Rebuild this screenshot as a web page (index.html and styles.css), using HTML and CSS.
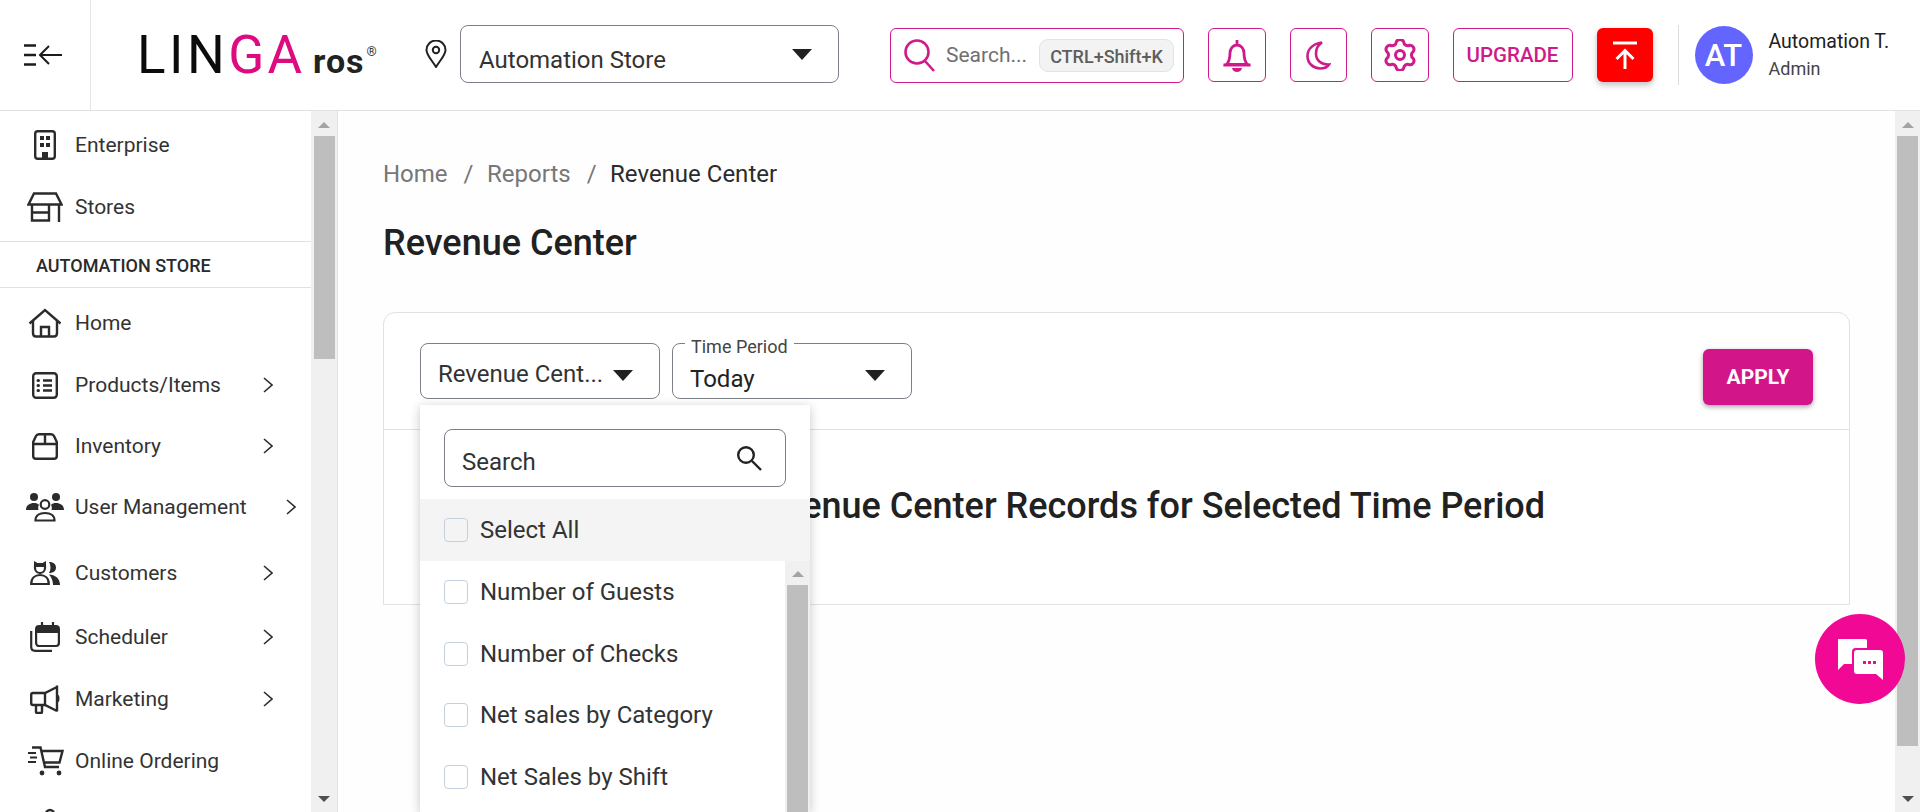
FILE: index.html
```html
<!DOCTYPE html>
<html lang="en">
<head>
    <meta charset="UTF-8">
    <title>Revenue Center</title>
    <link rel="stylesheet" href="styles.css">
</head>
<body>
    <header class="topbar">
        <div class="menu-toggle">
            <svg width="38" height="24" viewBox="0 0 38 24" fill="none" stroke="#1c1c1c" stroke-width="2.4"><path d="M0 2.5h12M0 12h12M0 21.5h12"/><path d="M38 12H16M25 3l-9 9 9 9" stroke-width="2"/></svg>
        </div>
        <div class="logo"><span class="logo-black">LIN</span><span class="logo-pink">GA</span><span class="logo-ros">ros</span><span class="logo-reg">®</span></div>
        <svg class="pin" width="22" height="28" viewBox="0 0 22 28" fill="none" stroke="#222" stroke-width="2"><path d="M11 27C6 19 1.500 15 1.500 10a9.500 9.500 0 0 1 19 0c0 5-4.500 9-9.500 17z"/><circle cx="11" cy="10" r="3.200"/></svg>
        <div class="store-select"><span class="store-name">Automation Store</span><i class="caret"></i></div>
        <div class="global-search">
            <svg width="34" height="34" viewBox="0 0 34 34" fill="none" stroke="#cf1a8b" stroke-width="2.600"><circle cx="14" cy="14" r="11.500"/><path d="M22 23l9 10"/></svg>
            <span class="search-hint">Search...</span>
            <span class="kbd">CTRL+Shift+K</span>
        </div>
        <div class="icon-btn icon-btn-first">
            <svg width="30" height="33" viewBox="0 0 30 33" fill="none" stroke="#cf1a8b" stroke-width="2.800"><path d="M15 1v5M4.500 25.500c3-3 3.500-6.500 3.500-11.500 0-4.500 3-8 7-8s7 3.500 7 8c0 5 .5 8.500 3.500 11.500z"/><path d="M1.500 26h27" stroke-width="3"/><path fill="#cf1a8b" stroke="none" d="M10 29h10c-.5 2.500-2.500 4-5 4s-4.500-1.500-5-4z"/></svg>
        </div>
        <div class="icon-btn">
            <svg width="25" height="29" viewBox="0 0 25 29" fill="none" stroke="#cf1a8b" stroke-width="2.600"><path d="M16 1.500C7 3 1.500 8 1.500 15c0 7.500 6 12.500 12.500 12.500 4 0 7.500-1.500 9-4-7.500.5-13-4-13-11 0-4.500 2-8.500 6-11z"/></svg>
        </div>
        <div class="icon-btn">
            <svg width="32" height="32" viewBox="0 0 32 32" fill="none" stroke="#cf1a8b" stroke-width="3"><path d="M12.280 3.020A4 4 0 0 1 19.720 3.020A4 4 0 0 0 25.380 6.290A4 4 0 0 1 29.100 12.730A4 4 0 0 0 29.100 19.270A4 4 0 0 1 25.380 25.710A4 4 0 0 0 19.720 28.980A4 4 0 0 1 12.280 28.980A4 4 0 0 0 6.620 25.710A4 4 0 0 1 2.900 19.270A4 4 0 0 0 2.900 12.730A4 4 0 0 1 6.620 6.290A4 4 0 0 0 12.280 3.020z"/><circle cx="16" cy="16" r="4.500"/></svg>
        </div>
        <div class="upgrade-btn">UPGRADE</div>
        <div class="publish-btn">
            <svg width="24" height="28" viewBox="0 0 24 28" fill="none" stroke="#fff" stroke-width="3"><path d="M0 2h24"/><path d="M12 28V10M3.500 18L12 9.500l8.500 8.500"/></svg>
        </div>
        <div class="user-chip">
            <div class="avatar">AT</div>
            <div class="user-text">
                <div class="user-name">Automation T.</div>
                <div class="user-role">Admin</div>
            </div>
        </div>
    </header>

    <div class="workspace">
        <aside class="sidebar">
            <nav class="nav">
                <a class="nav-item">
                    <span class="nav-icon"><svg width="22" height="30" viewBox="0 0 22 30" fill="none" stroke="#2b2b2b" stroke-width="2.400"><rect x="1.200" y="1.200" width="19.600" height="27.600" rx="2.500"/><path fill="#2b2b2b" stroke="none" d="M6 6h4v4H6zM12 6h4v4h-4zM6 13h4v4H6zM12 13h4v4h-4zM8 22h6v7H8z"/></svg></span>
                    Enterprise
                </a>
                <a class="nav-item">
                    <span class="nav-icon"><svg width="36" height="30" viewBox="0 0 36 30" fill="none" stroke="#2b2b2b" stroke-width="2.400"><path d="M7 1.500h22l5.500 11h-33z"/><path d="M5 12.500v16h17v-16M5 20.500h17M32 12.500V30"/></svg></span>
                    Stores
                </a>
                <div class="nav-section">AUTOMATION STORE</div>
                <a class="nav-item nav-item-first">
                    <span class="nav-icon"><svg width="34" height="30" viewBox="0 0 34 30" fill="none" stroke="#2b2b2b" stroke-width="2.400"><path d="M1.500 15.500L17 2l15.500 13.500"/><path d="M5 13v12c0 2 1 3.500 3 3.500h18c2 0 3-1.500 3-3.500V13"/><path d="M13 28.500V19h8v9.500"/></svg></span>
                    Home
                </a>
                <a class="nav-item">
                    <span class="nav-icon"><svg width="26" height="27" viewBox="0 0 26 27" fill="none" stroke="#2b2b2b" stroke-width="2.400"><rect x="1.200" y="1.200" width="23.600" height="24.600" rx="3"/><path d="M11 8.500h9M11 13.500h9M11 18.500h9"/><path stroke-width="3" stroke-linecap="round" d="M6 8.500h.5M6 13.500h.5M6 18.500h.5"/></svg></span>
                    Products/Items
                    <svg class="chevron" width="10" height="16" viewBox="0 0 10 16" fill="none" stroke="#2b2b2b" stroke-width="1.600"><path d="M1 1l8 7-8 7"/></svg>
                </a>
                <a class="nav-item nav-item-up1">
                    <span class="nav-icon"><svg width="26" height="27" viewBox="0 0 26 27" fill="none" stroke="#2b2b2b" stroke-width="2.400"><path d="M1.200 9L4 3c.5-1.200 1.500-1.800 3-1.800h12c1.500 0 2.500.6 3 1.800l2.800 6v14c0 1.800-1 2.800-2.800 2.800H4c-1.800 0-2.800-1-2.800-2.800zM1.200 11h23.600M13 1.200V11"/></svg></span>
                    Inventory
                    <svg class="chevron" width="10" height="16" viewBox="0 0 10 16" fill="none" stroke="#2b2b2b" stroke-width="1.600"><path d="M1 1l8 7-8 7"/></svg>
                </a>
                <a class="nav-item nav-item-up1">
                    <span class="nav-icon"><svg width="38" height="30" viewBox="0 0 38 30" fill="#2b2b2b"><circle cx="8" cy="5" r="4"/><circle cx="30" cy="5" r="4"/><path d="M0 18c0-5 4-7 8-7 2 0 4 .5 5 2-1 1-1 3-.5 5zM38 18c0-5-4-7-8-7-2 0-4 .5-5 2 1 1 1 3 .5 5z"/><g fill="none" stroke="#2b2b2b" stroke-width="2.200"><circle cx="19" cy="12.500" r="4.300"/><path d="M9.500 28.500c0-5 4-7.500 9.500-7.500s9.500 2.500 9.500 7.500z"/></g></svg></span>
                    User Management
                    <svg class="chevron chevron-far" width="10" height="16" viewBox="0 0 10 16" fill="none" stroke="#2b2b2b" stroke-width="1.600"><path d="M1 1l8 7-8 7"/></svg>
                </a>
                <a class="nav-item nav-item-down4">
                    <span class="nav-icon"><svg width="30" height="24" viewBox="0 0 30 24" fill="#2b2b2b"><path d="M19 1c5 0 7 2.500 7 5.500S24 12 19 12c2-3 2-8 0-11z"/><path d="M19 13.500c6 .5 11 3.500 11 10.500h-7c0-4-1.500-8-4-10.500z"/><path d="M4 0l3.500 2h5L16 0v6H4z"/><g fill="none" stroke="#2b2b2b" stroke-width="2.200"><path d="M5 4v3a5 5 0 0 0 10 0V4"/><path d="M1.200 23c0-6 4-9 8.800-9s8.800 3 8.800 9z"/></g></svg></span>
                    Customers
                    <svg class="chevron" width="10" height="16" viewBox="0 0 10 16" fill="none" stroke="#2b2b2b" stroke-width="1.600"><path d="M1 1l8 7-8 7"/></svg>
                </a>
                <a class="nav-item nav-item-down2">
                    <span class="nav-icon"><svg width="30" height="30" viewBox="0 0 30 30" fill="none" stroke="#2b2b2b" stroke-width="2.200"><rect x="6.100" y="4" width="22.800" height="20" rx="3"/><path fill="#2b2b2b" stroke="none" d="M7 4h21v7H7z"/><path d="M12 0v5M23 0v5"/><path d="M1.200 9v16c0 2.500 1.500 3.800 4 3.800H22"/></svg></span>
                    Scheduler
                    <svg class="chevron" width="10" height="16" viewBox="0 0 10 16" fill="none" stroke="#2b2b2b" stroke-width="1.600"><path d="M1 1l8 7-8 7"/></svg>
                </a>
                <a class="nav-item">
                    <span class="nav-icon"><svg width="30" height="30" viewBox="0 0 30 30" fill="none" stroke="#2b2b2b" stroke-width="2.400"><path d="M27 1.500v26M27 3L15 9H3c-1 0-1.800.8-1.800 2v8c0 1 .8 2 1.800 2h12l12 6"/><path d="M6 21v7c0 .7.5 1 1.200 1H11c.7 0 1-.3 1-1v-7"/><path d="M15 9v12"/><path fill="#2b2b2b" stroke="none" d="M28 11c2 0 2 7 0 7z"/></svg></span>
                    Marketing
                    <svg class="chevron" width="10" height="16" viewBox="0 0 10 16" fill="none" stroke="#2b2b2b" stroke-width="1.600"><path d="M1 1l8 7-8 7"/></svg>
                </a>
                <a class="nav-item">
                    <span class="nav-icon"><svg width="37" height="30" viewBox="0 0 37 30" fill="none" stroke="#2b2b2b" stroke-width="2.400"><path d="M5 1.500h8.500L18 21h14M13.500 5H35.500l-3 11.500H16.500"/><path d="M1 7h8M3 11.500h7M1 16h8" stroke-width="2"/><circle cx="15" cy="27" r="2.400" fill="#2b2b2b" stroke="none"/><circle cx="32" cy="27" r="2.400" fill="#2b2b2b" stroke="none"/></svg></span>
                    Online Ordering
                </a>
                <a class="nav-item">
                    <span class="nav-icon"><svg width="30" height="30" viewBox="0 0 30 30" fill="none" stroke="#2b2b2b" stroke-width="2.400"><circle cx="20" cy="6" r="4"/><path d="M20 10v18"/></svg></span>
                </a>
            </nav>
            <div class="scrollbar">
                <i class="arrow-up"></i>
                <div class="thumb thumb-side"></div>
                <div class="track-rest"></div>
                <i class="arrow-down"></i>
            </div>
        </aside>

        <main class="main">
            <div class="content">
                <div class="breadcrumb">
                    <span class="crumb-link">Home</span><span class="crumb-sep">/</span><span class="crumb-link">Reports</span><span class="crumb-sep">/</span><span>Revenue Center</span>
                </div>
                <h1 class="page-title">Revenue Center</h1>

                <section class="card">
                    <div class="filters">
                        <div class="filter-select">
                            <span class="filter-value">Revenue Cent...</span><i class="caret"></i>
                        </div>
                        <div class="filter-select filter-labelled">
                            <span class="filter-label">Time Period</span>
                            <span class="filter-value filter-value-low">Today</span><i class="caret"></i>
                        </div>
                        <button class="apply-btn">APPLY</button>

                        <div class="dropdown">
                            <div class="dropdown-search">
                                <span class="dropdown-search-text">Search</span>
                                <svg width="28" height="28" viewBox="0 0 28 28" fill="none" stroke="#222" stroke-width="2.400"><circle cx="11" cy="11" r="7.800"/><path d="M17 17l9 9"/></svg>
                            </div>
                            <label class="option option-all"><i class="check"></i>Select All</label>
                            <div class="option-scroll">
                                <div class="option-list">
                                    <label class="option"><i class="check"></i>Number of Guests</label>
                                    <label class="option"><i class="check"></i>Number of Checks</label>
                                    <label class="option"><i class="check"></i>Net sales by Category</label>
                                    <label class="option"><i class="check"></i>Net Sales by Shift</label>
                                </div>
                                <div class="scrollbar scrollbar-inner">
                                    <i class="arrow-up"></i>
                                    <div class="thumb"></div>
                                </div>
                            </div>
                        </div>
                    </div>
                    <div class="empty-state">No Revenue Center Records for Selected Time Period</div>
                </section>
            </div>
            <div class="scrollbar scrollbar-main">
                <i class="arrow-up"></i>
                <div class="thumb thumb-main"></div>
                <div class="track-rest"></div>
                <i class="arrow-down"></i>
            </div>
        </main>
    </div>

    <div class="chat-fab">
        <svg width="48" height="42" viewBox="0 0 48 42" fill="#fff"><path d="M2 0h27c1.500 0 2 .8 2 2v7H20c-3 0-4 1.500-4 4v12H8l-6 6z"/><path d="M21 11h23c2 0 3 1 3 3v27l-7-6H21c-2 0-3-1-3-3V14c0-2 1-3 3-3z"/><path fill="#f10894" d="M27 22h3v3h-3zM32 22h3v3h-3zM37 22h3v3h-3z"/></svg>
    </div>
</body>
</html>
```

FILE: styles.css
```css
* {
    box-sizing: border-box;
}
html, body {
    margin: 0;
    height: 812px;
    overflow: hidden;
}
body {
    font-family: Roboto, "Liberation Sans", sans-serif;
    color: #212121;
    background: #fff;
    display: flex;
    flex-direction: column;
}

/* top bar */
.topbar {
    height: 111px;
    flex: none;
    display: flex;
    align-items: center;
    border-bottom: 1px solid #e2e2e2;
    background: #fff;
}
.menu-toggle {
    width: 91px;
    height: 100%;
    flex: none;
    display: flex;
    align-items: center;
    padding-left: 24px;
    border-right: 1px solid #e4e4e4;
}
.logo {
    width: 288px;
    margin-left: 44px;
    padding-left: 2px;
    flex: none;
    display: flex;
    align-items: baseline;
    padding-top: 1px;
    font-size: 53px;
    line-height: 1;
}
.logo-black {
    color: #0b0b0b;
    letter-spacing: 3.500px;
}
.logo-pink {
    color: #dd0a80;
    letter-spacing: 3px;
}
.logo-ros {
    font-size: 34px;
    font-weight: 700;
    color: #222;
    margin-left: 8px;
    letter-spacing: 1px;
}
.logo-reg {
    font-size: 13px;
    color: #333;
    margin-left: 2px;
    align-self: flex-start;
    margin-top: 16px;
}
.pin {
    flex: none;
    margin-left: 2px;
    margin-top: -2px;
}
.store-select {
    width: 379px;
    height: 58px;
    margin-left: 13px;
    margin-top: -2px;
    flex: none;
    display: flex;
    align-items: center;
    justify-content: space-between;
    padding: 0 26px 0 18px;
    border: 1px solid #7b7f87;
    border-radius: 8px;
    font-size: 24px;
}
.store-name {
    padding-top: 11px;
    color: #333;
}
.caret {
    display: block;
    width: 0;
    height: 0;
    border-left: 10px solid transparent;
    border-right: 10px solid transparent;
    border-top: 11px solid #212121;
}
.global-search {
    width: 294px;
    height: 55px;
    margin-left: 51px;
    flex: none;
    display: flex;
    align-items: center;
    padding-left: 12px;
    border: 1px solid #cf1a8b;
    border-radius: 6px;
}
.search-hint {
    margin-left: 9px;
    font-size: 21px;
    color: #6f6f6f;
    white-space: nowrap;
}
.kbd {
    margin-left: 12px;
    padding: 0 10px;
    height: 33px;
    line-height: 33px;
    font-size: 18px;
    font-weight: 500;
    color: #5e5e5e;
    background: #f3f3f3;
    border: 1px solid #e3e3e3;
    border-radius: 9px;
    white-space: nowrap;
}
.icon-btn {
    width: 57.500px;
    height: 54px;
    margin-left: 24px;
    flex: none;
    display: flex;
    align-items: center;
    justify-content: center;
    border: 1px solid #cf1a8b;
    border-radius: 6px;
}
.upgrade-btn {
    width: 120px;
    height: 54px;
    margin-left: 24px;
    flex: none;
    display: flex;
    align-items: center;
    justify-content: center;
    border: 1px solid #cf1a8b;
    border-radius: 6px;
    color: #cf1a8b;
    font-size: 20.500px;
    font-weight: 500;
}
.publish-btn {
    width: 56px;
    height: 54px;
    margin-left: 24px;
    flex: none;
    display: flex;
    align-items: center;
    justify-content: center;
    background: #ff0000;
    border-radius: 6px;
    box-shadow: 0 3px 6px rgba(0, 0, 0, .25);
}
.user-chip {
    margin-left: 25px;
    height: 60px;
    display: flex;
    align-items: center;
    padding-left: 16px;
    border-left: 1px solid #dcdcdc;
}
.avatar {
    width: 58px;
    height: 58px;
    flex: none;
    border-radius: 50%;
    background: #6464ff;
    color: #fff;
    display: flex;
    align-items: center;
    justify-content: center;
    font-size: 31px;
    font-weight: 500;
}
.user-text {
    margin-left: 16px;
}
.user-name {
    font-size: 19.500px;
    line-height: 24px;
    white-space: nowrap;
}
.user-role {
    font-size: 18px;
    color: #444;
    line-height: 24px;
    margin-top: 3px;
}

/* body split */
.workspace {
    flex: 1;
    display: flex;
    min-height: 0;
}
.sidebar {
    width: 338px;
    flex: none;
    display: flex;
    border-right: 1px solid #e2e2e2;
}
.nav {
    width: 311px;
    flex: none;
    overflow: hidden;
    padding-top: 3px;
}
.nav-item {
    height: 62px;
    display: flex;
    align-items: center;
    padding-left: 26px;
    font-size: 21px;
    color: #333;
    white-space: nowrap;
}
.nav-item-first { margin-top: 4px; }
.nav-item-up1 { margin-top: -1px; }
.nav-item-down4 { margin-top: 4px; }
.nav-item-down2 { margin-top: 2px; }
.nav-icon {
    width: 38px;
    margin-right: 11px;
    flex: none;
    display: flex;
    justify-content: center;
}
.chevron {
    position: absolute;
    left: 263px;
}
.chevron-far {
    left: 286px;
}
.nav-section {
    height: 47px;
    margin-top: 3px;
    padding: 2px 0 0 36px;
    display: flex;
    align-items: center;
    font-size: 18px;
    font-weight: 500;
    color: #2a2a2a;
    border-top: 1px solid #e2e2e2;
    border-bottom: 1px solid #e2e2e2;
}

/* fake scrollbars, drawn so they show in every browser mode */
.scrollbar {
    width: 26px;
    flex: none;
    display: flex;
    flex-direction: column;
    align-items: center;
    background: #f0f0f0;
    padding-top: 11px;
}
.thumb {
    width: 21px;
    background: #bebebe;
    margin-top: 8px;
    flex: 1;
}
.thumb-side {
    flex: none;
    height: 223px;
}
.thumb-main {
    flex: none;
    height: 610px;
}
.track-rest {
    flex: 1;
}
.arrow-up {
    width: 0;
    height: 0;
    border-left: 6px solid transparent;
    border-right: 6px solid transparent;
    border-bottom: 6px solid #a3a3a3;
}
.arrow-down {
    width: 0;
    height: 0;
    margin-bottom: 10px;
    border-left: 6px solid transparent;
    border-right: 6px solid transparent;
    border-top: 6px solid #505050;
}

/* main column */
.main {
    flex: 1;
    display: flex;
    min-width: 0;
    background: #fefefe;
}
.content {
    flex: 1;
    min-width: 0;
    padding: 45px 45px 0 45px;
}
.breadcrumb {
    display: flex;
    height: 36px;
    align-items: center;
    font-size: 24px;
    color: #2b2b2b;
}
.crumb-link {
    color: #777;
}
.crumb-sep {
    color: #777;
    margin: 0 13.500px 0 16px;
}
.page-title {
    margin: 28px 0 0;
    height: 46px;
    line-height: 46px;
    font-size: 36px;
    font-weight: 500;
    color: #212121;
}
.card {
    margin-top: 46px;
    height: 293px;
    background: #fff;
    border: 1px solid #e2e2e2;
    border-radius: 12px 12px 0 0;
}
.filters {
    position: relative;
    height: 117px;
    padding: 30px 36px 0 36px;
    display: flex;
    border-bottom: 1px solid #e2e2e2;
}
.filter-select {
    position: relative;
    width: 240px;
    height: 56px;
    margin-right: 12px;
    flex: none;
    display: flex;
    align-items: center;
    justify-content: space-between;
    padding: 0 26px 0 17px;
    border: 1px solid #7b7f87;
    border-radius: 8px;
}
.filter-select .caret {
    margin-top: 8px;
}
.filter-value {
    font-size: 24px;
    color: #333;
    margin-top: 5px;
}
.filter-value-low {
    margin-top: 15.500px;
    color: #222;
}
.filter-label {
    position: absolute;
    left: 12px;
    top: -6px;
    padding: 0 6px;
    background: #fff;
    font-size: 18px;
    line-height: 18px;
    color: #444;
}
.apply-btn {
    margin: 6px 0 0 auto;
    width: 110px;
    height: 56px;
    border: 0;
    border-radius: 6px;
    background: #d2168a;
    color: #fff;
    font-family: inherit;
    font-size: 21px;
    font-weight: 700;
    box-shadow: 0 2px 5px rgba(0, 0, 0, .35);
}
.empty-state {
    padding-top: 54px;
    text-align: center;
    font-size: 36px;
    font-weight: 500;
    line-height: 44px;
    color: #212121;
}

/* open multi select, runs off the bottom of the window */
.dropdown {
    position: absolute;
    left: 36px;
    top: 92px;
    width: 390px;
    height: 407px;
    display: flex;
    flex-direction: column;
    background: #fff;
    box-shadow: 0 2px 10px rgba(0, 0, 0, .22);
    padding-top: 24px;
    z-index: 5;
}
.dropdown-search {
    width: 342px;
    height: 58px;
    flex: none;
    margin: 0 0 12px 24px;
    display: flex;
    align-items: center;
    justify-content: space-between;
    padding: 0 22px 0 17px;
    border: 1px solid #7b7f87;
    border-radius: 8px;
    font-size: 24px;
    color: #333;
}
.dropdown-search-text {
    padding-top: 7px;
}
.option {
    height: 61.500px;
    flex: none;
    display: flex;
    align-items: center;
    padding-left: 24px;
    font-size: 24px;
    color: #333;
}
.option-all {
    background: #f4f4f4;
}
.check {
    width: 24px;
    height: 24px;
    margin-right: 12px;
    flex: none;
    background: #fff;
    border: 1px solid #c5cfdd;
    border-radius: 4px;
}
.option-all .check {
    background: #f4f4f4;
}
.option-scroll {
    display: flex;
    flex: 1;
    min-height: 0;
}
.option-list {
    flex: 1;
    padding-top: 1px;
}
.scrollbar-inner {
    width: 25px;
    padding-top: 10px;
}
.scrollbar-main {
    width: 25px;
}

.chat-fab {
    position: absolute;
    left: 1815px;
    top: 614px;
    width: 90px;
    height: 90px;
    border-radius: 50%;
    background: #f10894;
    display: flex;
    align-items: center;
    justify-content: center;
    padding-top: 2px;
}
```
